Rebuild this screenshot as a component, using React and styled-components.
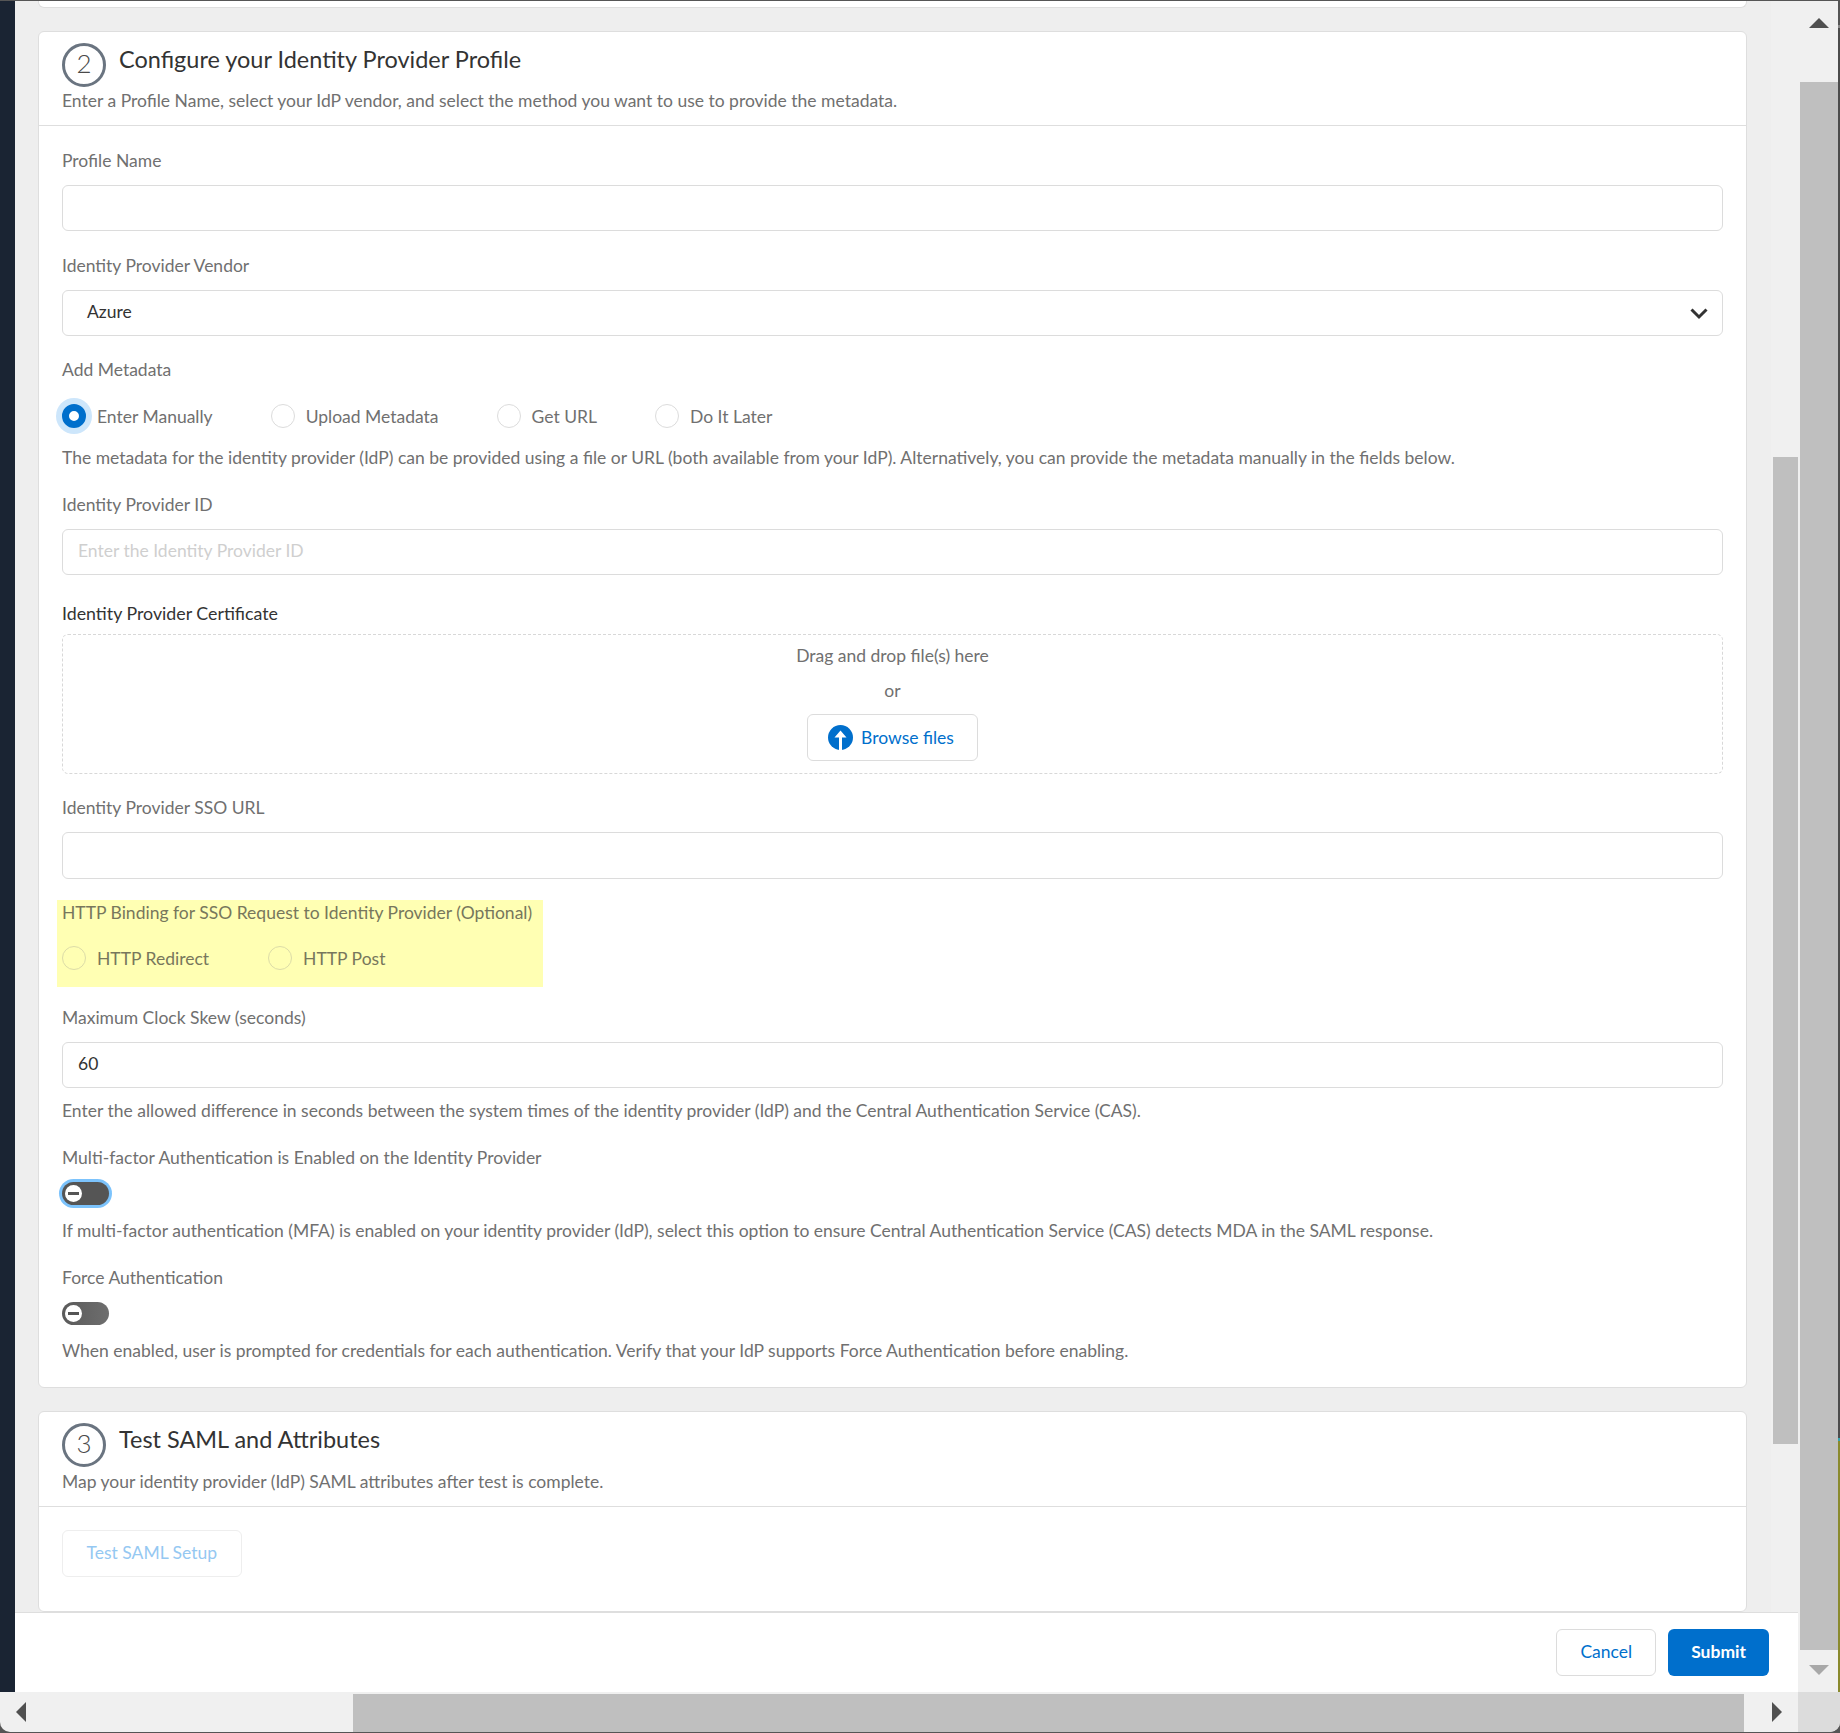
import React from "react";
import styled, { createGlobalStyle } from "styled-components";

const Global = createGlobalStyle`
  html, body { margin: 0; padding: 0; background: #fff; overflow: hidden; }
  * { box-sizing: border-box; }
  body { font-family: Lato, "Open Sans", sans-serif; font-size: 17.5px; color: #707070; }
`;

const Window = styled.div`
  width: 1840px;
  height: 1733px;
  display: flex;
  flex-direction: column;
  overflow: hidden;
  background: #555;
  padding-top: 1px;
`;
const TopRow = styled.div`
  flex: 1;
  min-height: 0;
  display: flex;
`;
const Sidebar = styled.div`
  width: 15px;
  background: #1a2433;
`;
const Modal = styled.div`
  flex: 1;
  min-width: 0;
  display: flex;
  flex-direction: column;
  background: #fff;
`;
const ScrollRow = styled.div`
  height: 1611px;
  display: flex;
  background: #eeeeee;
`;
const Content = styled.div`
  flex: 1;
  min-width: 0;
  overflow: hidden;
  padding: 0 24px 0 23px;
`;
const CardStub = styled.div`
  height: 7px;
  background: #fff;
  border: 1px solid #dedede;
  border-top: 0;
  border-radius: 0 0 6px 6px;
  margin-bottom: 23px;
`;
const Card = styled.section`
  background: #fff;
  border: 1px solid #dedede;
  border-radius: 6px;
  margin-bottom: ${(p) => p.$mb || 0}px;
  height: ${(p) => p.$h}px;
`;
const CardHeader = styled.header`
  height: ${(p) => p.$h}px;
  padding: 11px 23px 0;
  border-bottom: 1px solid #dedede;
`;
const TitleRow = styled.div`
  display: flex;
  height: 47px;
`;
const Step = styled.span`
  width: 44px;
  height: 44px;
  border: 3px solid #6a7480;
  border-radius: 50%;
  display: flex;
  align-items: center;
  justify-content: center;
  padding-bottom: 4px;
  font-size: 26px;
  font-weight: 300;
  color: #4a4a4a;
  flex: none;
`;
const Title = styled.h2`
  margin: 2px 0 0 13px;
  font-size: 23.47px;
  line-height: 28px;
  font-weight: 400;
  color: #333;
`;
const Desc = styled.p`
  margin: ${(p) => p.$mt || 0}px 0 0;
  line-height: 20px;
  color: #707070;
`;
const CardBody = styled.div`
  padding: ${(p) => p.$pt}px 23px 0;
`;
const Label = styled.div`
  height: 20px;
  line-height: 20px;
  margin-top: ${(p) => p.$mt || 0}px;
  color: ${(p) => (p.$dark ? "#333" : "#707070")};
  font-size: ${(p) => (p.$dark ? "17.8px" : "17.5px")};
`;
const Input = styled.div`
  height: ${(p) => p.$h || 46}px;
  margin-top: ${(p) => p.$mt ?? 14}px;
  border: 1px solid #dcdcdc;
  border-radius: 6px;
  background: #fff;
  display: flex;
  align-items: center;
  justify-content: space-between;
  padding: ${(p) => p.$pad || "0 16px 4px 15px"};
  color: ${(p) => p.$color || "#333"};
`;
const SelectArrow = styled.svg`
  margin-top: 5px;
`;
const RadioRow = styled.div`
  display: flex;
  align-items: center;
  height: 24px;
  margin-top: ${(p) => p.$mt}px;
  gap: ${(p) => p.$gap}px;
`;
const RadioItem = styled.label`
  display: flex;
  align-items: center;
  gap: 11px;
`;
const Radio = styled.span`
  width: 24px;
  height: 24px;
  border-radius: 50%;
  flex: none;
  background: ${(p) => (p.$tint ? "transparent" : "#fff")};
  border: ${(p) =>
    p.$checked ? "7.5px solid #006fcc" : p.$tint ? "1px solid #dcdca8" : "1px solid #dcdcdc"};
  box-shadow: ${(p) => (p.$checked ? "0 0 0 6px #cde6fb" : "none")};
`;
const Highlight = styled.div`
  margin: 21px 0 21px -5px;
  width: 486px;
  height: 87px;
  padding: 3px 5px 0;
  background: #ffffb3;
  color: #77775c;
  & > div { color: #77775c; }
`;
const DropZone = styled.div`
  margin-top: 11px;
  height: 140px;
  border: 1px dashed #d8d8d8;
  border-radius: 6px;
  display: flex;
  flex-direction: column;
  align-items: center;
  padding-top: 11px;
  color: #707070;
`;
const DropLine = styled.div`
  line-height: 20px;
  margin-bottom: ${(p) => p.$mb}px;
`;
const OutlineButton = styled.button`
  font: inherit;
  height: 47px;
  padding: ${(p) => p.$pad || "0 23px 2px"};
  background: #fff;
  border: 1px solid ${(p) => (p.$disabled ? "#eeeeee" : "#dcdcdc")};
  border-radius: 6px;
  color: ${(p) => (p.$disabled ? "#95c8f2" : "#006fcc")};
  display: inline-flex;
  align-items: center;
  gap: 8px;
`;
const PrimaryButton = styled.button`
  font: inherit;
  font-weight: 700;
  height: 47px;
  padding: 0 23px 2px;
  background: #006fcc;
  border: 0;
  border-radius: 6px;
  color: #fff;
`;
const Toggle = styled.span`
  display: flex;
  align-items: center;
  width: 47px;
  height: 23px;
  border-radius: 12px;
  margin-top: ${(p) => p.$mt}px;
  padding-left: 3px;
  background: ${(p) => (p.$focus ? "#555555" : "linear-gradient(90deg,#5a5a5a,#6e6e6e)")};
  box-shadow: ${(p) => (p.$focus ? "0 0 0 3px #7cc3fc" : "none")};
`;
const Knob = styled.span`
  width: 17px;
  height: 17px;
  border-radius: 50%;
  background: #fff;
  display: flex;
  align-items: center;
  justify-content: center;
  &::before {
    content: "";
    width: 11px;
    height: 2.5px;
    background: #555;
  }
`;
const Footer = styled.footer`
  flex: 1;
  border-top: 1px solid #dedede;
  background: #fff;
  display: flex;
  justify-content: flex-end;
  align-items: flex-start;
  gap: 12px;
  padding: 16px 29px 0 0;
`;
const VTrack = styled.div`
  width: 27px;
  padding: ${(p) => p.$top}px 0 0 2px;
  background: #f0f0f0;
`;
const VThumbInner = styled.div`
  width: 25px;
  height: ${(p) => p.$h}px;
  background: #bfbfbf;
`;
const OuterV = styled.div`
  width: 40px;
  background: #f0f0f0;
  display: flex;
  flex-direction: column;
  align-items: stretch;
  padding-left: 2px;
`;
const Sliver = styled.div`
  width: 2px;
  background: linear-gradient(
    180deg,
    #555555 0 24px,
    #8a8a8a 24px 27px,
    #4c4c4c 27px 1437px,
    #35a5b0 1437px 1440px,
    #8a8a2e 1440px
  );
`;
const ArrowBox = styled.div`
  height: ${(p) => p.$h}px;
  width: 38px;
  display: flex;
  justify-content: center;
  padding-top: ${(p) => p.$pt}px;
`;
const Tri = styled.span`
  width: 0;
  height: 0;
  border-style: solid;
  border-color: transparent;
  ${(p) =>
    p.$dir === "up"
      ? "border-width: 0 10px 10px; border-bottom-color: #505050;"
      : p.$dir === "down"
      ? "border-width: 10px 10px 0; border-top-color: #a8a8a8;"
      : p.$dir === "left"
      ? "border-width: 10px 10px 10px 0; border-right-color: #505050;"
      : "border-width: 10px 0 10px 10px; border-left-color: #505050;"}
`;
const OuterThumb = styled.div`
  width: 38px;
  height: 1568px;
  background: #bfbfbf;
`;
const HBar = styled.div`
  height: 40px;
  margin-bottom: 1px;
  display: flex;
  background: #f0f0f0;
  border-radius: 0 0 10px 10px;
  overflow: hidden;
`;
const HArrow = styled.div`
  width: ${(p) => p.$w}px;
  display: flex;
  align-items: center;
  padding-left: ${(p) => p.$pl}px;
`;
const HThumb = styled.div`
  width: 1391px;
  margin-top: 2px;
  background: #bfbfbf;
`;
const Corner = styled.div`
  width: 42px;
  background: #dcdcdc;
`;

const Chevron = () => (
  <SelectArrow width="18" height="13" viewBox="0 0 18 13" fill="none">
    <path d="M1.5 2.5 L9 10 L16.5 2.5" stroke="#333" strokeWidth="3" />
  </SelectArrow>
);

const UploadIcon = () => (
  <svg width="25" height="25" viewBox="0 0 25 25">
    <circle cx="12.5" cy="12.5" r="12.5" fill="#006fcc" />
    <path d="M12.5 5.5 L18.5 12.5 H14 V25 H11 V12.5 H6.5 Z" fill="#fff" />
  </svg>
);

export default function App() {
  return (
    <>
      <Global />
      <Window>
        <TopRow>
          <Sidebar />
          <Modal>
            <ScrollRow>
              <Content>
                <CardStub />
                <Card $h={1357} $mb={23}>
                  <CardHeader $h={94}>
                    <TitleRow>
                      <Step>2</Step>
                      <Title>Configure your Identity Provider Profile</Title>
                    </TitleRow>
                    <Desc $mt={1}>Enter a Profile Name, select your IdP vendor, and select the method you want to use to provide the metadata.</Desc>
                  </CardHeader>
                  <CardBody $pt={25}>
                    <Label>Profile Name</Label>
                    <Input />
                    <Label $mt={25}>Identity Provider Vendor</Label>
                    <Input $pad="0 14px 4px 24px">
                      Azure
                      <Chevron />
                    </Input>
                    <Label $mt={24}>Add Metadata</Label>
                    <RadioRow $mt={24} $gap={58}>
                      <RadioItem><Radio $checked />Enter Manually</RadioItem>
                      <RadioItem><Radio />Upload Metadata</RadioItem>
                      <RadioItem><Radio />Get URL</RadioItem>
                      <RadioItem><Radio />Do It Later</RadioItem>
                    </RadioRow>
                    <Desc $mt={20}>The metadata for the identity provider (IdP) can be provided using a file or URL (both available from your IdP). Alternatively, you can provide the metadata manually in the fields below.</Desc>
                    <Label $mt={27}>Identity Provider ID</Label>
                    <Input $color="#cfcfcf">Enter the Identity Provider ID</Input>
                    <Label $mt={28} $dark>Identity Provider Certificate</Label>
                    <DropZone>
                      <DropLine $mb={15}>Drag and drop file(s) here</DropLine>
                      <DropLine $mb={13}>or</DropLine>
                      <OutlineButton $pad="0 23px 0 20px"><UploadIcon />Browse files</OutlineButton>
                    </DropZone>
                    <Label $mt={24}>Identity Provider SSO URL</Label>
                    <Input $mt={14} $h={47} />
                    <Highlight>
                      <Label>HTTP Binding for SSO Request to Identity Provider (Optional)</Label>
                      <RadioRow $mt={23} $gap={59}>
                        <RadioItem><Radio $tint />HTTP Redirect</RadioItem>
                        <RadioItem><Radio $tint />HTTP Post</RadioItem>
                      </RadioRow>
                    </Highlight>
                    <Label>Maximum Clock Skew (seconds)</Label>
                    <Input $mt={14} $h={46}>60</Input>
                    <Desc $mt={13}>Enter the allowed difference in seconds between the system times of the identity provider (IdP) and the Central Authentication Service (CAS).</Desc>
                    <Label $mt={27}>Multi-factor Authentication is Enabled on the Identity Provider</Label>
                    <Toggle $mt={14} $focus><Knob /></Toggle>
                    <Desc $mt={16}>If multi-factor authentication (MFA) is enabled on your identity provider (IdP), select this option to ensure Central Authentication Service (CAS) detects MDA in the SAML response.</Desc>
                    <Label $mt={27}>Force Authentication</Label>
                    <Toggle $mt={14}><Knob /></Toggle>
                    <Desc $mt={16}>When enabled, user is prompted for credentials for each authentication. Verify that your IdP supports Force Authentication before enabling.</Desc>
                  </CardBody>
                </Card>
                <Card $h={201}>
                  <CardHeader $h={95}>
                    <TitleRow>
                      <Step>3</Step>
                      <Title>Test SAML and Attributes</Title>
                    </TitleRow>
                    <Desc $mt={2}>Map your identity provider (IdP) SAML attributes after test is complete.</Desc>
                  </CardHeader>
                  <CardBody $pt={23}>
                    <OutlineButton $disabled $pad="0 23.5px 2px">Test SAML Setup</OutlineButton>
                  </CardBody>
                </Card>
              </Content>
              <VTrack $top={456}>
                <VThumbInner $h={987} />
              </VTrack>
            </ScrollRow>
            <Footer>
              <OutlineButton>Cancel</OutlineButton>
              <PrimaryButton>Submit</PrimaryButton>
            </Footer>
          </Modal>
          <OuterV>
            <ArrowBox $h={81} $pt={17}><Tri $dir="up" /></ArrowBox>
            <OuterThumb />
            <ArrowBox $h={42} $pt={15}><Tri $dir="down" /></ArrowBox>
          </OuterV>
          <Sliver />
        </TopRow>
        <HBar>
          <HArrow $w={353} $pl={16}><Tri $dir="left" /></HArrow>
          <HThumb />
          <HArrow $w={54} $pl={28}><Tri $dir="right" /></HArrow>
          <Corner />
        </HBar>
      </Window>
    </>
  );
}
